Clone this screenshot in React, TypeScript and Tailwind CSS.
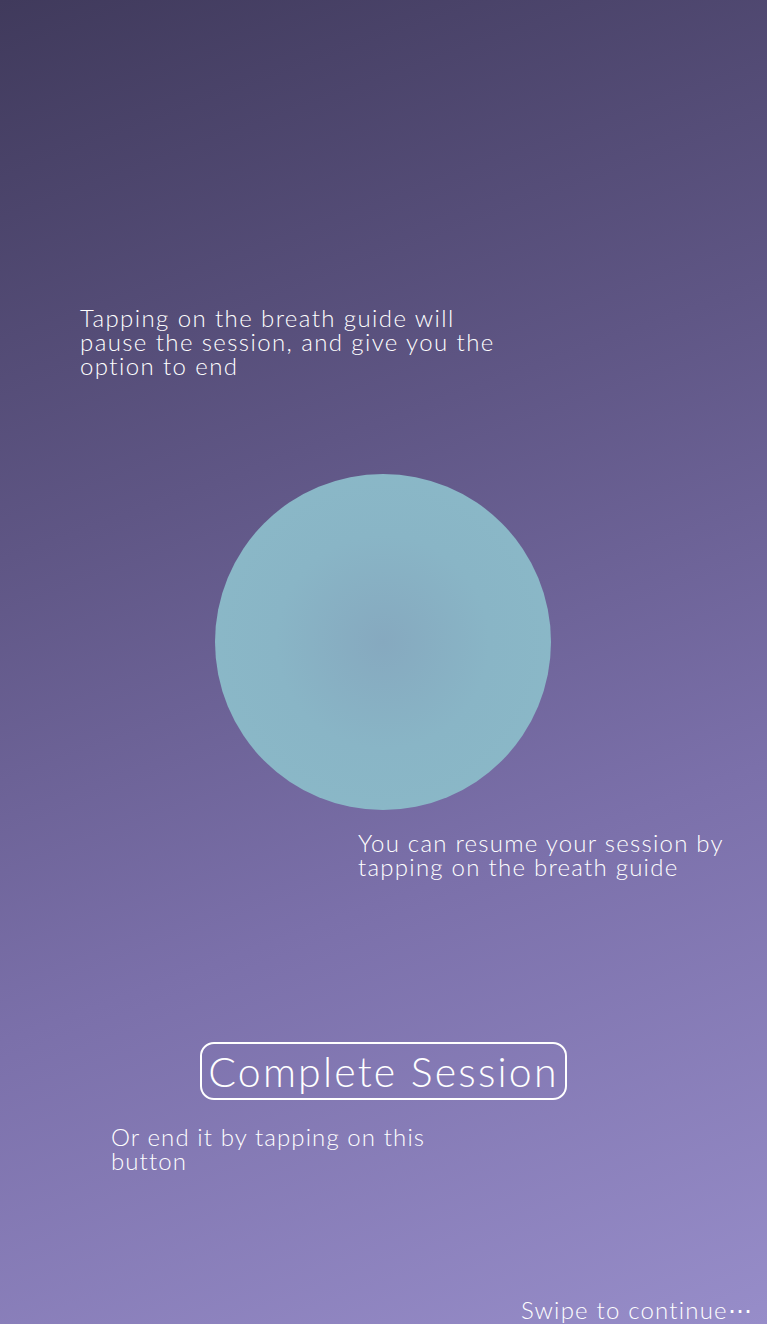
export default function App() {
  return (
    <div className="relative flex h-[1324px] w-full flex-col overflow-hidden bg-[linear-gradient(160deg,#403a5c_0%,#5f5685_35%,#7b70aa_65%,#978dc9_100%)] font-['Lato','Open_Sans',sans-serif] font-light text-white">
      <p className="ml-[80px] mt-[306px] whitespace-nowrap text-[24px] leading-[24px] tracking-[1.4px]">
        Tapping on the breath guide will
        <br />
        pause the session, and give you the
        <br />
        option to end
      </p>

      <div className="ml-[215px] mt-[96px] h-[336px] w-[336px] rounded-full bg-[radial-gradient(circle,#86a9bf_0%,#89b5c6_45%,#8bbac8_100%)]" />

      <p className="ml-[358px] mt-[21px] whitespace-nowrap text-[24px] leading-[24px] tracking-[1.25px]">
        You can resume your session by
        <br />
        tapping on the breath guide
      </p>

      <button className="ml-[200px] mt-[163px] flex h-[58px] w-[367px] items-center justify-center rounded-[14px] border-2 border-white text-[41px] font-light leading-none tracking-[2.2px] text-white">
        Complete Session
      </button>

      <p className="ml-[111px] mt-[25px] whitespace-nowrap text-[24px] leading-[24px] tracking-[1.1px]">
        Or end it by tapping on this
        <br />
        button
      </p>

      <p className="mr-[14px] mt-auto mb-[2px] self-end whitespace-nowrap text-[24px] leading-[24px] tracking-[1.2px]">
        Swipe to continue⋯
      </p>
    </div>
  )
}
